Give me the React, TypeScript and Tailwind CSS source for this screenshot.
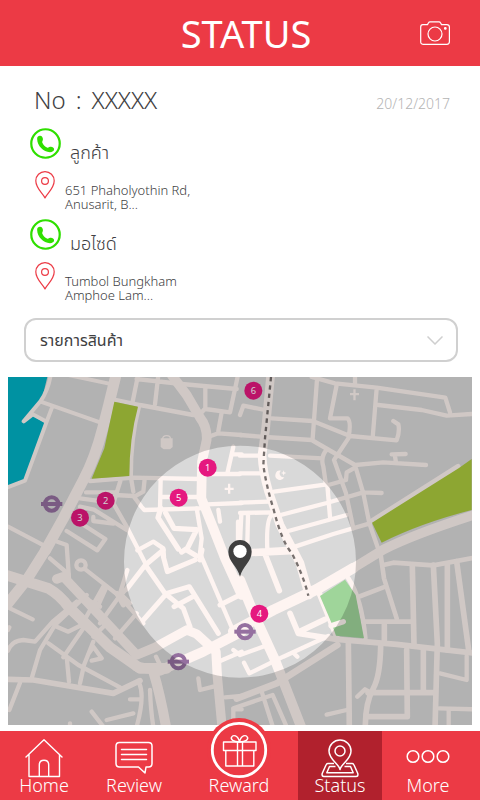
import type { ReactNode } from "react";

type IconProps = { className?: string };

function CameraIcon({ className }: IconProps) {
  return (
    <svg viewBox="0 0 30 24" className={className} fill="none" stroke="currentColor" strokeWidth="1.2" strokeLinejoin="round" aria-hidden="true">
      <path d="M2.800 3.600H7.500L8.500 1.800Q9 .800 10 .800H19Q20 .800 20.500 1.800L21.500 3.600H26.800Q29.400 3.600 29.400 6V20.800Q29.400 23.300 26.800 23.300H3Q.700 23.300 .700 20.800V6Q.700 3.600 2.800 3.600Z" />
      <circle cx="15" cy="13" r="7" />
      <circle cx="25.300" cy="7.400" r=".8" fill="currentColor" />
    </svg>
  );
}

function PhoneIcon({ className }: IconProps) {
  return (
    <svg viewBox="0 0 32 32" className={className} fill="none" aria-hidden="true">
      <circle cx="16" cy="16" r="14.700" stroke="currentColor" strokeWidth="2.300" />
      <path fill="currentColor" d="M7.400 11.600C7 9 8.700 7.700 10.600 7.900C12.900 8.200 14 11 13 13.200C12.600 14.100 12.400 14.700 12.900 15.600C13.900 17.700 15.500 19.300 17.500 20.200C18.400 20.600 19 20.300 19.900 19.700C22 18.500 24.700 19.800 24.900 21.800C25 24 22.900 25 20.600 25C13.800 24.700 7.600 18.300 7.400 11.600Z" />
    </svg>
  );
}

function PlaceIcon({ className }: IconProps) {
  return (
    <svg viewBox="0 0 20 28" className={className} fill="none" stroke="currentColor" strokeWidth="1.200" strokeLinejoin="round" aria-hidden="true">
      <path d="M10 27C8 22.500 .800 17.500 .800 9.800A9.200 9.200 0 0 1 19.200 9.800C19.200 17.500 12 22.500 10 27Z" />
      <circle cx="10" cy="10" r="3.400" />
    </svg>
  );
}

function HomeIcon() {
  return (
    <svg viewBox="0 0 38 40" className="h-10 w-[38px]" fill="none" stroke="currentColor" strokeWidth="1.400" strokeLinecap="round" strokeLinejoin="round" aria-hidden="true">
      <path d="M1 18L19 .800L37 18M4 15.500V37.500H34.500V15.500M14.300 37V26Q14.300 21.300 19 21.300T23.700 26V37" />
    </svg>
  );
}

function ReviewIcon() {
  return (
    <svg viewBox="0 0 38 40" className="h-10 w-[38px]" fill="none" stroke="currentColor" strokeWidth="1.500" strokeLinecap="round" strokeLinejoin="round" aria-hidden="true">
      <path d="M4.500 3.500H33.500Q37 3.500 37 7V24.500Q37 28 33.500 28H31L30 34L23.500 28H4.500Q1 28 1 24.500V7Q1 3.500 4.500 3.500Z" />
      <path d="M6.500 10.500H31.500M6.500 15.500H31.500M6.500 20.500H31.500" />
    </svg>
  );
}

function RewardIcon() {
  return (
    <svg viewBox="0 0 64 61" className="h-[61px] w-16" fill="none" stroke="currentColor" strokeWidth="1.400" strokeLinejoin="round" aria-hidden="true">
      <circle cx="32" cy="32" r="32" fill="#ec3a45" stroke="none" />
      <circle cx="32" cy="32" r="26.700" strokeWidth="2.800" />
      <path d="M16.500 24H49V32.500H16.500ZM18.800 32.500H46.800V48H18.800ZM30.500 24V48M35.500 24V48" />
      <path d="M32.500 24C26 23.500 23.500 21.500 24.500 19.300C26 16.500 31 17 32.500 24C34 17 39 16.500 40.500 19.300C41.500 21.500 39 23.500 32.500 24Z" />
    </svg>
  );
}

function StatusIcon() {
  return (
    <svg viewBox="0 0 38 40" className="h-10 w-[38px]" fill="none" stroke="currentColor" strokeWidth="1.500" strokeLinejoin="round" aria-hidden="true">
      <path d="M19 30.500C17.500 24.500 8 20.500 8 12A11 11 0 0 1 30 12C30 20.500 20.500 24.500 19 30.500Z" />
      <circle cx="19" cy="12" r="5" />
      <path d="M13 24.500H7Q5.500 24.500 5 26L1.200 34.500Q.500 37.500 3 37.500H35Q37.500 37.500 36.800 34.500L33 26Q32.500 24.500 31 24.500H25M14.500 27.500H8.500L5.800 33.800H32.200L29.500 27.500H23.500" />
    </svg>
  );
}

function MoreIcon() {
  return (
    <svg viewBox="0 0 44 40" className="h-10 w-11" fill="none" stroke="currentColor" strokeWidth="1.500" aria-hidden="true">
      <circle cx="7" cy="17.500" r="5.800" />
      <circle cx="22" cy="17.500" r="5.800" />
      <circle cx="37" cy="17.500" r="5.800" />
    </svg>
  );
}

function Station({ x, y }: { x: number; y: number }) {
  return (
    <g transform={`translate(${x} ${y})`} fill="none" stroke="#9570a0">
      <circle r="20" strokeWidth="12" />
      <path d="M-32 0H32" strokeWidth="12" />
    </g>
  );
}

function Stop({ x, y, n }: { x: number; y: number; n: number }) {
  return (
    <g transform={`translate(${x} ${y})`}>
      <circle r="27" fill="#e5187f" />
      <text y="10" textAnchor="middle" fill="#fff" fontSize="28" className="font-['Noto_Sans',sans-serif] font-normal">
        {n}
      </text>
    </g>
  );
}

function CityMap() {
  return (
    <svg viewBox="24 6 1392 1044" className="block h-auto w-full" role="img" aria-label="Delivery map">
      <rect x="24" y="6" width="1392" height="1044" fill="#d9d9d9" />
      <path fill="#00b3c6" d="M24 6H142L125 75L70 138L98 122L135 145L75 315L24 332Z" />

      <g fill="none" stroke="#fef4f1" strokeWidth="13" strokeLinecap="round" strokeLinejoin="round">
        {/* north west */}
        <path strokeWidth="33" d="M348 0L326 90L308 160Q285 250 250 315L190 430L137 525" />
        <path strokeWidth="12" d="M152 0Q145 45 122 78L71 139L98 118L140 140L75 317L20 338M122 80L300 142M155 100L140 140M205 0L327 26" />
        <path d="M335 72L420 90L580 120M413 6L398 80M475 0L465 88M410 12L545 27L710 42M616 40V102L690 112L714 0M614 102L598 120M655 168L665 112M630 184L655 175L725 180" />
        <path strokeWidth="29" d="M515 0L560 60L600 128Q622 155 620 195L606 260L604 370L640 460L675 550L725 660" />
        <path strokeWidth="12" d="M418 92Q392 190 393 305" />
        <path d="M270 318L400 308L600 312M615 297H720M620 388L725 384M700 215L682 295M702 238H725" />
        <path d="M258 352L345 352M240 370L290 377M361 318L340 385L380 455L436 565M345 360L400 363L424 395L433 405L600 400M434 312L430 350L403 365M393 308L400 350M482 312L480 400M482 366H590" />
        <path strokeWidth="16" d="M482 400L474 428L535 522M497 414L522 460L590 464L562 520L545 531" />
        <path d="M590 400L605 490L600 535L705 780M412 526L460 500L490 520L492 545" />
        <path d="M240 395L282 404L380 465M280 426V438L340 446M200 468L292 526L316 492L232 438M24 455L144 518M172 500L200 510L207 610" />
        <path d="M655 405L660 440M714 440V500" />

        {/* north east */}
        <g transform="translate(720 0)">
          <path strokeWidth="26" d="M92 0L77 160L66 240Q68 290 86 350L120 450L180 565L207 660" />
          <path d="M232 0L218 190M215 6L285 25L410 38L616 68L630 112M345 0V25M410 40L398 188M415 90L545 105L620 122L695 117" />
          <path d="M290 30L270 130H322Q335 140 325 190L282 255L318 355L340 460M0 120L10 92L75 105M95 130L218 138L330 183L470 196Q480 170 475 148L460 138" />
          <path d="M0 180L75 186L215 195L345 270L370 355L388 445L414 520M262 222Q240 245 250 275L258 330M90 242L248 250M0 242H65M346 270L430 262L558 270M468 262L464 238M455 238L497 237M370 352L425 354" />
          <path d="M265 330L318 315L320 292L345 278M0 295H68M102 350L260 328M122 420L260 384L370 352M262 330L270 426M145 468L320 420M165 515L280 477L390 445M0 383L86 380M0 414L98 412M24 420L22 505M96 420Q78 430 82 525M0 530L165 520M4 420L0 500" />
          <path strokeWidth="15" d="M392 440L654 274" />
          <path strokeWidth="29" d="M340 579L430 524Q520 478 710 417" />
        </g>

        {/* south west */}
        <g transform="translate(0 525)">
          <path strokeWidth="32" d="M137 0L80 90L24 160M20 76L145 115Q180 135 205 170L330 292L420 355H500" />
          <path strokeWidth="28" d="M170 87L190 80L270 165L410 315L465 292L560 240L590 252L648 305L652 380L666 530" />
          <path strokeWidth="30" d="M410 350L480 362L610 305L725 245M460 365Q480 430 498 530" />
          <path strokeWidth="17" d="M20 388L100 390L340 430L420 392" />
          <path d="M28 480L60 398M95 385L120 300L165 225L260 135M24 302Q35 272 70 270L105 275L158 215L230 155M24 172L98 208M150 25L205 72M256 58L360 140L430 220" />
          <circle cx="243" cy="45" r="14" />
          <path d="M165 228L205 245L245 225L310 110M145 280L235 345L360 412M250 235L190 322M200 320L207 395M240 400L252 345L280 275M265 312L280 290L305 325L275 332M280 260L325 215M300 220L350 150L385 110M320 110L295 165M255 145L300 170M345 265L410 190M390 160L360 130L382 60M24 240L28 232" />
          <path strokeWidth="15" d="M380 118L436 45L495 130L550 175L570 230M350 130L370 165M430 210L500 130L568 110L655 250M522 170L575 142M436 45L490 0M490 20L502 65L585 30M606 0L600 30M660 165L725 132M560 0L590 18" />
          <path d="M418 400Q435 440 410 530M390 448H420M450 420Q452 480 460 530M275 485L310 530M320 510L400 490M210 520V530M468 320L480 345M595 385L600 420L640 410M675 442L725 438M700 530V478H725M655 335L725 305" />
        </g>

        {/* south east */}
        <g transform="translate(720 525)">
          <path strokeWidth="32" d="M-20 244L100 180L230 118L340 54" />
          <path strokeWidth="30" d="M0 90L45 200L105 330L185 535" />
          <path strokeWidth="20" d="M-10 446L110 400L292 285" />
          <path strokeWidth="17" d="M0 12L152 5M75 12L118 122M238 130L290 260M150 190L175 250L290 268L470 283L710 310M178 245L255 208" />
          <path strokeWidth="14" d="M325 85Q365 145 376 265M420 0L432 85L470 205M362 138L430 112M376 215H515M430 45L460 38L580 46L710 22" />
          <path strokeWidth="17" d="M517 50L522 282M580 45L592 280L585 535M622 42V300M650 35L686 300M433 225V270M325 280L328 535M422 290Q420 380 400 415Q375 460 376 535M500 300L502 500L380 499M550 300V420M384 428L580 427" />
          <path d="M352 440L375 418L392 428M600 370L680 390V318M597 475L710 478M626 480V535M260 494L320 480M12 338L28 370L130 320L265 258M0 315L75 288M160 308L172 320M-20 475L98 435L142 535M65 425L100 535M-20 300L0 315" />
        </g>
      </g>

      <path fill="#adcb3d" d="M343 80L414 95Q388 190 388 303L275 311L313 220Z" />
      <path fill="#adcb3d" d="M1116 443L1377 279L1415 252V405Q1260 445 1145 503Z" />
      <path fill="#9fd59a" d="M960 663L1035 614L1067 660L1092 790L1008 782L993 740Z" />
      <path d="M993 752L1030 740" stroke="#fef4f1" strokeWidth="16" strokeLinecap="round" />
      <path d="M813 6L795 190L790 270Q798 330 820 400Q845 500 875 534Q910 600 925 662" fill="none" stroke="#77706e" strokeWidth="7" strokeDasharray="13 12" />

      <g fill="#fef4f1">
        <path d="M482 190H518V216L510 223H491L482 216Z" />
        <path d="M488 192Q488 182 500 182T511 192" fill="none" stroke="#fef4f1" strokeWidth="4" />
        <path d="M684 326H691V338H701V345H691V356H684V345H674V338H684ZM1060 43H1067V54H1077V61H1067V76H1060V61H1050V54H1060Z" />
        <path d="M843 287A14 14 0 1 0 853 306A11 11 0 0 1 843 287Z" />
        <path d="M851 286L853 292L859 294L853 296L851 302L849 296L843 294L849 292Z" />
      </g>

      <Station x={155} y={387} />
      <Station x={535} y={860} />
      <Station x={735} y={770} />
      <Stop n={1} x={623} y={278} />
      <Stop n={2} x={317} y={377} />
      <Stop n={3} x={240} y={428} />
      <Stop n={4} x={778} y={716} />
      <Stop n={5} x={536} y={368} />
      <Stop n={6} x={760} y={47} />

      <path fill="#000" fillOpacity=".18" fillRule="evenodd" d="M24 6H1416V1050H24ZM372 560A348 348 0 1 0 1068 560A348 348 0 1 0 372 560Z" />
      <path fill="#3f3f3f" d="M720 605C712 573 685 560 685 530A35 35 0 0 1 755 530C755 560 728 573 720 605Z" />
      <circle cx="720" cy="529" r="20" fill="#fff" />
    </svg>
  );
}

function Contact({ name, lines }: { name: string; lines: string[] }) {
  return (
    <section className="h-[91px]">
      <div className="flex h-[41px] gap-[9px]">
        <button type="button" aria-label={`Call ${name}`} className="size-[31px] shrink-0 text-[#2fdf00]">
          <PhoneIcon className="size-[31px]" />
        </button>
        <h2 className="pt-3 text-lg leading-6">{name}</h2>
      </div>
      <div className="flex gap-2.5 pl-[5px] pt-0.5">
        <PlaceIcon className="h-7 w-5 shrink-0 text-[#ec3a45]" />
        <address className="pt-3 text-[13px] leading-[14px] not-italic">
          {lines[0]}
          <br />
          {lines[1]}
        </address>
      </div>
    </section>
  );
}

function NavItem({ label, icon, active = false }: { label: string; icon: ReactNode; active?: boolean }) {
  return (
    <a
      href={`#${label.toLowerCase()}`}
      aria-current={active ? "page" : undefined}
      className={`flex h-[69px] flex-col items-center justify-end pb-[5px] ${active ? "bg-[#b1212d]" : ""}`}
    >
      <span className="-mb-1 shrink-0">{icon}</span>
      <span className="relative text-lg leading-5">{label}</span>
    </a>
  );
}

export default function App() {
  return (
    <div className="w-full bg-white font-['Noto_Sans','Noto_Sans_Thai',sans-serif] font-light text-[#404042]">
      <header className="grid h-[66px] grid-cols-[1fr_auto_1fr] items-center bg-[#ec3a45] px-[30px] text-white">
        <h1 className="col-start-2 pl-3 text-[38px] leading-10 font-normal">STATUS</h1>
        <button type="button" aria-label="Take photo" className="justify-self-end">
          <CameraIcon className="h-6 w-[30px]" />
        </button>
      </header>

      <main>
        <div className="flex h-[62px] items-baseline justify-between pl-[34px] pr-[30px] pt-[18px]">
          <p className="flex gap-2.5 text-2xl">
            <span>No</span>
            <span>:</span>
            <span>XXXXX</span>
          </p>
          <time dateTime="2017-12-20" className="text-sm text-[#b4b4b4]">20/12/2017</time>
        </div>
        <div className="px-[30px]">
          <Contact name="ลูกค้า" lines={["651 Phaholyothin Rd,", "Anusarit, B..."]} />
          <Contact name="มอไซด์" lines={["Tumbol Bungkham", "Amphoe Lam..."]} />
        </div>
        <div className="relative ml-6 mr-[22px] mt-2">
          <select aria-label="รายการสินค้า" className="block h-11 w-full appearance-none rounded-xl border-2 border-[#d0d0d0] bg-white px-3.5 text-base font-normal">
            <option>รายการสินค้า</option>
          </select>
          <svg viewBox="0 0 16 9" className="pointer-events-none absolute right-[15px] top-[18px] h-[9px] w-4" fill="none" stroke="#cfcfcf" strokeWidth="1.500" aria-hidden="true">
            <path d="M.500 .500L8 8L15.500 .500" />
          </svg>
        </div>
        <div className="mx-2 mt-[15px]">
          <CityMap />
        </div>
      </main>

      <nav aria-label="Main" className="mt-1.5 grid grid-cols-[88fr_92fr_118fr_84fr_92fr] bg-[#ec3a45] pr-1.5 text-white">
        <NavItem label="Home" icon={<HomeIcon />} />
        <NavItem label="Review" icon={<ReviewIcon />} />
        <NavItem label="Reward" icon={<RewardIcon />} />
        <NavItem label="Status" icon={<StatusIcon />} active />
        <NavItem label="More" icon={<MoreIcon />} />
      </nav>
    </div>
  );
}
